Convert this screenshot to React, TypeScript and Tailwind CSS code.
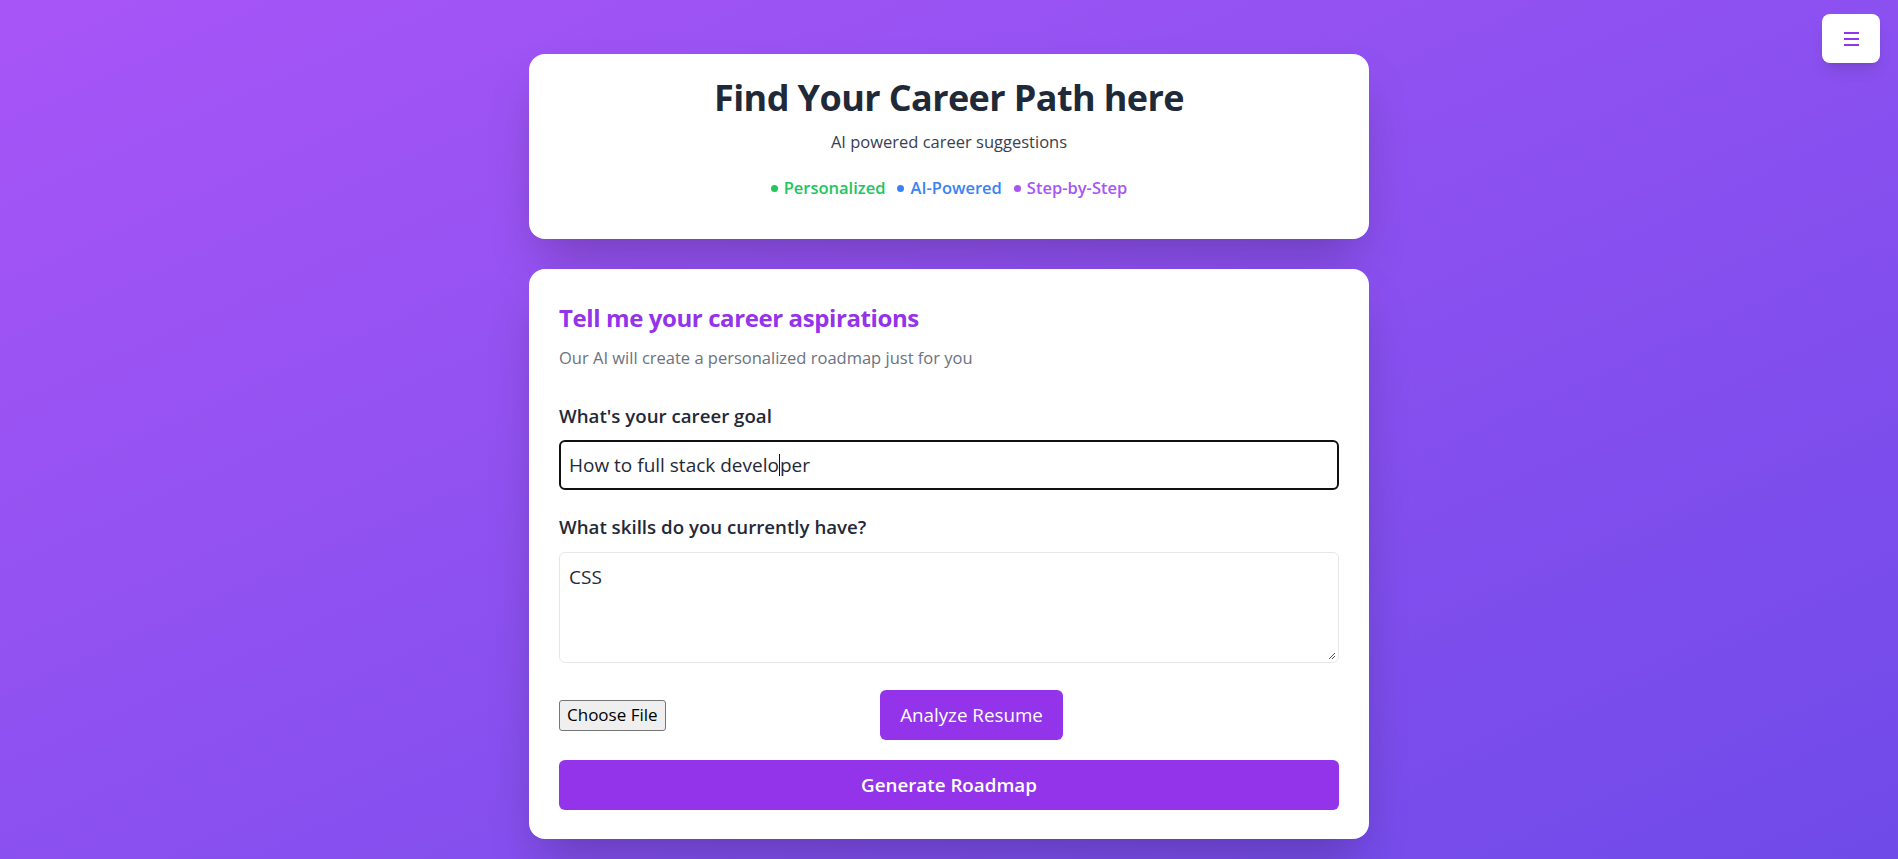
import React from "react";

export default function App() {
  return (
    <div className="min-h-[859px] w-full bg-gradient-to-br from-[#a855f7] to-[#6f4ae9] font-['Open_Sans',sans-serif] relative">
      <button className="absolute top-[14px] right-[18px] w-[58px] h-[49px] bg-white rounded-lg shadow-lg flex flex-col items-center justify-center gap-[4px]">
        <span className="block w-[15px] h-[2px] bg-[#9333ea]" />
        <span className="block w-[15px] h-[2px] bg-[#9333ea]" />
        <span className="block w-[15px] h-[2px] bg-[#9333ea]" />
      </button>

      <div className="w-[840px] mx-auto pt-[54px] pb-[20px] flex flex-col gap-[30px]">
        <div className="bg-white rounded-2xl shadow-2xl pt-6 pb-[39px] px-8 flex flex-col items-center">
          <h1 className="text-4xl leading-10 font-bold tracking-[-0.6px] text-[#1f2937]">Find Your Career Path here</h1>
          <p className="mt-3 text-[16.5px] leading-6 text-[#374151]">AI powered career suggestions</p>
          <div className="mt-[22px] flex items-center gap-3 text-[16.5px] leading-6 font-semibold">
            <span className="flex items-center gap-[6px] text-[#22c55e]">
              <span className="w-[7px] h-[7px] rounded-full bg-[#22c55e]" />
              Personalized
            </span>
            <span className="flex items-center gap-[6px] text-[#3b82f6]">
              <span className="w-[7px] h-[7px] rounded-full bg-[#3b82f6]" />
              AI-Powered
            </span>
            <span className="flex items-center gap-[6px] text-[#a855f7]">
              <span className="w-[7px] h-[7px] rounded-full bg-[#a855f7]" />
              Step-by-Step
            </span>
          </div>
        </div>

        <div className="bg-white rounded-2xl shadow-2xl pt-[33px] pb-[29px] px-[30px] flex flex-col">
          <h2 className="text-2xl leading-8 font-bold tracking-[-0.4px] text-[#9333ea]">Tell me your career aspirations</h2>
          <p className="mt-3 text-[16.5px] leading-6 text-[#6b7280]">Our AI will create a personalized roadmap just for you</p>

          <label className="mt-8 text-[18.7px] leading-7 font-semibold text-[#1f2937]">What's your career goal</label>
          <div className="mt-[10px] h-[50px] border-2 border-[#111111] rounded-md flex items-center px-[8px] text-[19px] text-[#1f2937]">
            <span>How to full stack develo</span>
            <span className="inline-block w-px h-[22px] bg-[#111111]" />
            <span>per</span>
          </div>

          <label className="mt-[23px] text-[18.7px] leading-7 font-semibold text-[#1f2937]">What skills do you currently have?</label>
          <div className="mt-[11px] h-[111px] border border-[#e5e7eb] rounded-md px-[9px] pt-[10px] text-[19px] leading-7 text-[#1f2937] relative">
            CSS
            <svg className="absolute right-[2px] bottom-[2px]" width="8" height="8" viewBox="0 0 8 8">
              <path d="M7 1 L1 7 M7 4 L4 7" stroke="#555" strokeWidth="1" />
            </svg>
          </div>

          <div className="mt-[27px] flex items-center gap-4">
            <div className="w-[305px]">
              <span className="inline-flex items-center h-[31px] px-[7px] bg-[#efefef] border border-[#767676] rounded-[3px] text-[17px] text-black">
                Choose File
              </span>
            </div>
            <button className="h-[50px] w-[183px] bg-[#9333ea] text-white text-[18.8px] font-medium rounded-md">
              Analyze Resume
            </button>
          </div>

          <button className="mt-5 h-[50px] w-full bg-[#9333ea] text-white text-[18.8px] font-semibold rounded-md">
            Generate Roadmap
          </button>
        </div>
      </div>
    </div>
  );
}
